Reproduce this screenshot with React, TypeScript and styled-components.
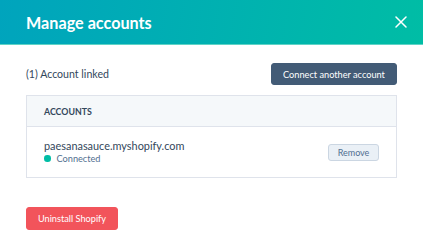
import React from 'react';
import styled, { createGlobalStyle } from 'styled-components';

const GlobalStyle = createGlobalStyle`
  body {
    margin: 0;
    background: #ffffff;
    font-family: Lato, "Noto Sans", Arial, sans-serif;
    color: #33475b;
  }
`;

const Modal = styled.div`
  width: 423px;
  height: 250px;
  background: #fff;
  display: flex;
  flex-direction: column;
`;

const Header = styled.header`
  height: 45px;
  flex-shrink: 0;
  box-sizing: border-box;
  display: flex;
  align-items: center;
  justify-content: space-between;
  padding: 0 10px 0 26px;
  background: linear-gradient(100deg, #00a4bd 0%, #00bda5 100%);
  border-bottom: 1px solid #5fd3c6;
`;

const Title = styled.h1`
  margin: 0;
  font-size: 16.2px;
  font-weight: 700;
  color: #fff;
`;

const CloseButton = styled.button`
  width: 24px;
  height: 24px;
  border: none;
  padding: 0;
  background: transparent;
  display: flex;
  align-items: center;
  justify-content: center;
  cursor: pointer;
`;

const Body = styled.div`
  padding: 18px 26px 0 26px;
  display: flex;
  flex-direction: column;
`;

const TopRow = styled.div`
  display: flex;
  align-items: center;
  justify-content: space-between;
  height: 22px;
`;

const LinkedText = styled.span`
  font-size: 10.6px;
  color: #33475b;
`;

const Button = styled.button<{ $variant: 'dark' | 'danger' | 'light' }>`
  font-family: Lato, "Noto Sans", Arial, sans-serif;
  box-sizing: border-box;
  border-radius: 3px;
  cursor: pointer;
  display: inline-flex;
  align-items: center;
  justify-content: center;
  padding: 0;
  ${({ $variant }) =>
    $variant === 'dark'
      ? `background: #425b76; border: 1px solid #425b76; color: #fff; font-size: 9.2px; width: 126px; height: 22px;`
      : $variant === 'danger'
      ? `background: #f2545b; border: 1px solid #f2545b; color: #fff; font-size: 9.2px; width: 92px; height: 23px;`
      : `background: #eaf0f6; border: 1px solid #cbd6e2; color: #506e91; font-size: 9px; width: 51px; height: 17px;`}
`;

const Table = styled.div`
  margin-top: 10px;
  border: 1px solid #dfe3eb;
  display: flex;
  flex-direction: column;
`;

const TableHead = styled.div`
  height: 30px;
  background: #f5f8fa;
  border-bottom: 1px solid #dfe3eb;
  display: flex;
  align-items: center;
  padding-left: 17px;
  font-size: 8.8px;
  font-weight: 700;
  color: #33475b;
`;

const TableRow = styled.div`
  height: 50px;
  display: flex;
  align-items: center;
  justify-content: space-between;
  padding: 0 17px;
`;

const AccountInfo = styled.div`
  display: flex;
  flex-direction: column;
  gap: 1px;
  margin-top: -1px;
`;

const Domain = styled.span`
  font-size: 10.9px;
  color: #33475b;
`;

const Status = styled.span`
  display: flex;
  align-items: center;
  gap: 6px;
  font-size: 9.2px;
  color: #516f90;
`;

const Dot = styled.span`
  width: 6.5px;
  height: 6.5px;
  border-radius: 50%;
  background: #00bda5;
`;

const Footer = styled.div`
  margin-top: 28px;
`;

export default function App() {
  return (
    <>
      <GlobalStyle />
      <Modal>
        <Header>
          <Title>Manage accounts</Title>
          <CloseButton aria-label="Close">
            <svg width="12" height="12" viewBox="0 0 12 12">
              <path d="M1 1 L11 11 M11 1 L1 11" stroke="#fff" strokeWidth="1.5" strokeLinecap="round" />
            </svg>
          </CloseButton>
        </Header>
        <Body>
          <TopRow>
            <LinkedText>(1) Account linked</LinkedText>
            <Button $variant="dark">Connect another account</Button>
          </TopRow>
          <Table>
            <TableHead>ACCOUNTS</TableHead>
            <TableRow>
              <AccountInfo>
                <Domain>paesanasauce.myshopify.com</Domain>
                <Status>
                  <Dot />
                  Connected
                </Status>
              </AccountInfo>
              <Button $variant="light">Remove</Button>
            </TableRow>
          </Table>
          <Footer>
            <Button $variant="danger">Uninstall Shopify</Button>
          </Footer>
        </Body>
      </Modal>
    </>
  );
}
